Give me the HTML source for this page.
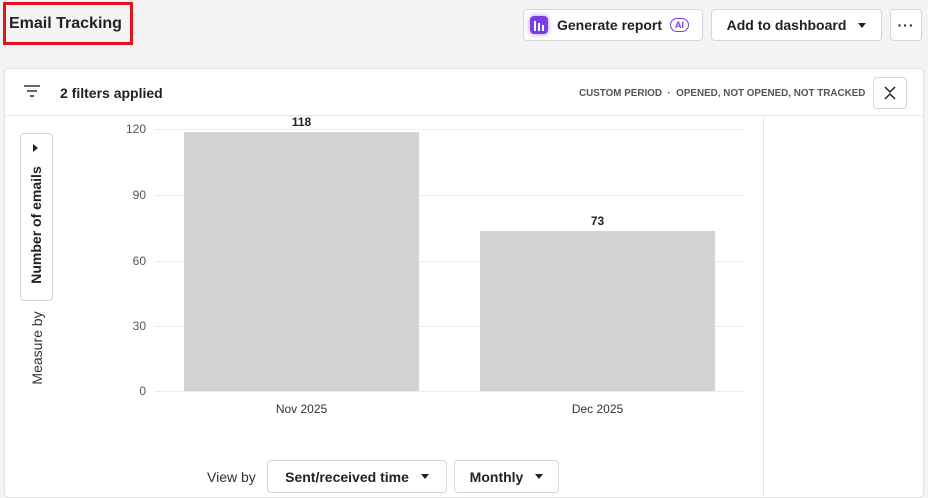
<!DOCTYPE html>
<html><head><style>
*{box-sizing:border-box;margin:0;padding:0}
body{width:928px;height:493px;background:#f4f4f4;font-family:"Liberation Sans",sans-serif;color:#222;position:relative;overflow:hidden}
.a{position:absolute}
.btn{position:absolute;background:#fff;border:1px solid #d6d6d6;border-radius:4px;font-size:14px;font-weight:bold;color:#222;display:flex;align-items:center;justify-content:center}
.tri{display:inline-block;width:0;height:0;border-left:4px solid transparent;border-right:4px solid transparent;border-top:5px solid #222;margin-left:12px}
.gl{position:absolute;left:155px;width:590px;height:1px;background:#ececec}
.yl{position:absolute;width:40px;left:106px;text-align:right;font-size:12px;color:#555}
</style></head><body>
<div class="a" style="left:3px;top:2px;width:130px;height:43px;border:3px solid #e0141e;background:#f4f4f4"></div>
<div class="a" style="left:9px;top:15px;font-size:16px;font-weight:bold;color:#222">Email Tracking</div>

<div class="btn" style="left:523px;top:9px;width:180px;height:32px;justify-content:flex-start;padding-left:6px">
 <span style="width:18px;height:18px;border-radius:4px;background:#7a3fe0;box-shadow:0 0 6px #b58cf5;display:inline-flex;align-items:flex-end;justify-content:center;gap:2px;padding-bottom:3px">
  <i style="width:2px;height:10px;background:#fff"></i><i style="width:2px;height:8px;background:#fff"></i><i style="width:2px;height:6px;background:#fff"></i></span>
 <span style="margin-left:9px">Generate report</span>
 <span style="margin-left:8px;font-size:9px;color:#7a3fe0;border:1px solid #7a3fe0;border-radius:8px;padding:1px 4px">AI</span>
</div>
<div class="btn" style="left:711px;top:9px;width:171px;height:32px">Add to dashboard<span class="tri"></span></div>
<div class="btn" style="left:890px;top:9px;width:32px;height:32px;font-size:14px;letter-spacing:1px">···</div>

<div class="a" style="left:4px;top:68px;width:920px;height:430px;background:#fff;border:1px solid #e2e2e2;border-radius:4px"></div>
<div class="a" style="left:5px;top:115px;width:918px;height:1px;background:#e6e6e6"></div>
<div class="a" style="left:763px;top:116px;width:1px;height:380px;background:#e6e6e6"></div>
<svg class="a" style="left:23px;top:84px" width="18" height="14"><path d="M1 2h16M4 7h10M7 12h4" stroke="#333" stroke-width="1.6"/></svg>
<div class="a" style="left:60px;top:85px;font-size:14px;font-weight:bold">2 filters applied</div>
<div class="a" style="left:579px;top:88px;font-size:9.85px;font-weight:bold;color:#555;white-space:nowrap">CUSTOM PERIOD &nbsp;·&nbsp; OPENED, NOT OPENED, NOT TRACKED</div>
<div class="btn" style="left:873px;top:77px;width:34px;height:32px"><svg width="14" height="16"><path d="M2 2l5 5 5-5M2 14l5-5 5 5" stroke="#222" stroke-width="1.5" fill="none"/></svg></div>

<div class="gl" style="top:129px"></div><div class="gl" style="top:195px"></div><div class="gl" style="top:261px"></div><div class="gl" style="top:326px"></div><div class="gl" style="top:391px"></div>
<div class="yl" style="top:122px">120</div><div class="yl" style="top:188px">90</div><div class="yl" style="top:254px">60</div><div class="yl" style="top:319px">30</div><div class="yl" style="top:384px">0</div>
<div class="a" style="left:184px;top:132px;width:235px;height:259px;background:#d3d3d3"></div>
<div class="a" style="left:480px;top:231px;width:235px;height:160px;background:#d3d3d3"></div>
<div class="a" style="left:184px;top:115px;width:235px;text-align:center;font-size:12px;font-weight:bold">118</div>
<div class="a" style="left:480px;top:214px;width:235px;text-align:center;font-size:12px;font-weight:bold">73</div>
<div class="a" style="left:184px;top:402px;width:235px;text-align:center;font-size:12px;color:#333">Nov 2025</div>
<div class="a" style="left:480px;top:402px;width:235px;text-align:center;font-size:12px;color:#333">Dec 2025</div>

<div class="a" style="left:20px;top:133px;width:33px;height:168px;border:1px solid #d6d6d6;border-radius:4px"></div>
<div class="a" style="left:33px;top:144px;width:0;height:0;border-top:4px solid transparent;border-bottom:4px solid transparent;border-left:5px solid #222"></div>
<div class="a" style="left:36px;top:225px;transform:translate(-50%,-50%) rotate(-90deg);font-size:14px;font-weight:bold;white-space:nowrap">Number of emails</div>
<div class="a" style="left:37px;top:348px;transform:translate(-50%,-50%) rotate(-90deg);font-size:14px;color:#333;white-space:nowrap">Measure by</div>

<div class="a" style="left:207px;top:469px;font-size:14px;color:#333">View by</div>
<div class="btn" style="left:267px;top:460px;width:180px;height:33px">Sent/received time<span class="tri"></span></div>
<div class="btn" style="left:454px;top:460px;width:105px;height:33px">Monthly<span class="tri"></span></div>
</body></html>
